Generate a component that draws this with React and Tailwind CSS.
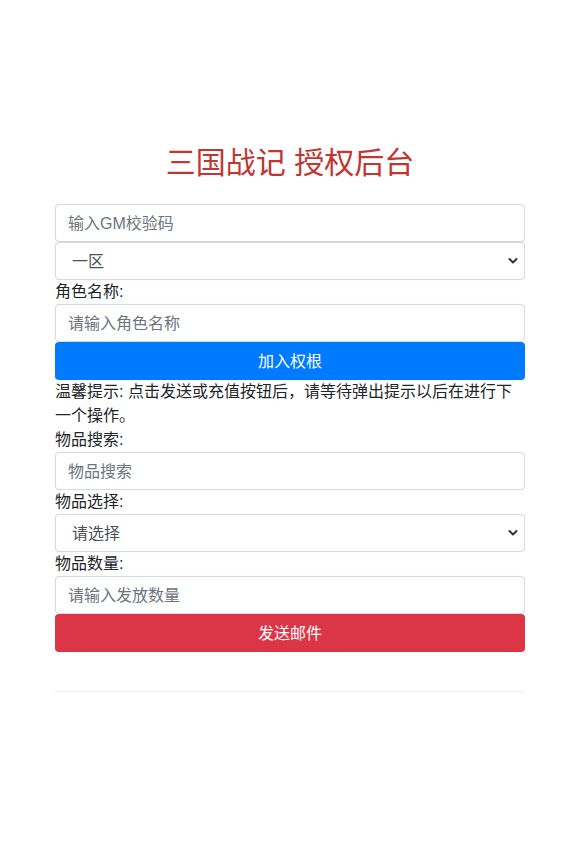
import { useState } from "react";

const font = "font-['Liberation_Sans','Noto_Sans_CJK_SC',sans-serif]";
const inputClass = "block w-full h-[38px] px-3 pt-[2px] rounded border border-[#d6d9dd] bg-white text-base text-[#495057] placeholder-[#6c757d] shadow-[0_0_1px_rgba(0,0,0,0.08)] focus:outline-none";
const labelClass = "block text-base leading-6 text-[#212529]";

function Chevron() {
  return (
    <svg className="pointer-events-none absolute right-[7px] top-1/2 -translate-y-1/2" width="10" height="7" viewBox="0 0 10 7" fill="none">
      <path d="M1.5 1.5 L5 5 L8.5 1.5" stroke="#333" strokeWidth="2" strokeLinecap="round" strokeLinejoin="round" />
    </svg>
  );
}

function Select({ value, onChange, children }) {
  return (
    <div className="relative">
      <select value={value} onChange={onChange} className={`${inputClass} appearance-none pl-4 pr-8 text-[#212529]`}>
        {children}
      </select>
      <Chevron />
    </div>
  );
}

export default function App() {
  const [form, setForm] = useState({ code: "", zone: "1", role: "", search: "", item: "", count: "" });
  const set = (k) => (e) => setForm((p) => ({ ...p, [k]: e.target.value }));

  return (
    <div className={`min-h-[852px] bg-white ${font}`}>
      <div className="ml-[55px] w-[470px] pt-[145px]">
        <h1 className="text-center text-[30px] leading-[36px] font-normal text-[#c23530] mb-[23px]">三国战记 授权后台</h1>

        <input type="text" value={form.code} onChange={set("code")} placeholder="输入GM校验码" className={inputClass} />
        <Select value={form.zone} onChange={set("zone")}>
          <option value="1">一区</option>
          <option value="2">二区</option>
        </Select>

        <label className={labelClass}>角色名称:</label>
        <input type="text" value={form.role} onChange={set("role")} placeholder="请输入角色名称" className={inputClass} />
        <button type="button" className="block w-full h-[38px] pt-[2px] rounded bg-[#007bff] text-base text-white">加入权根</button>

        <p className="text-base leading-6 text-[#212529]">温馨提示: 点击发送或充值按钮后，请等待弹出提示以后在进行下一个操作。</p>

        <label className={labelClass}>物品搜索:</label>
        <input type="text" value={form.search} onChange={set("search")} placeholder="物品搜索" className={inputClass} />

        <label className={labelClass}>物品选择:</label>
        <Select value={form.item} onChange={set("item")}>
          <option value="">请选择</option>
        </Select>

        <label className={labelClass}>物品数量:</label>
        <input type="text" value={form.count} onChange={set("count")} placeholder="请输入发放数量" className={inputClass} />
        <button type="button" className="block w-full h-[38px] pt-[2px] rounded bg-[#dc3545] text-base text-white">发送邮件</button>

        <hr className="mt-[39px] border-0 border-t border-[#f1f1f1]" />
      </div>
    </div>
  );
}
